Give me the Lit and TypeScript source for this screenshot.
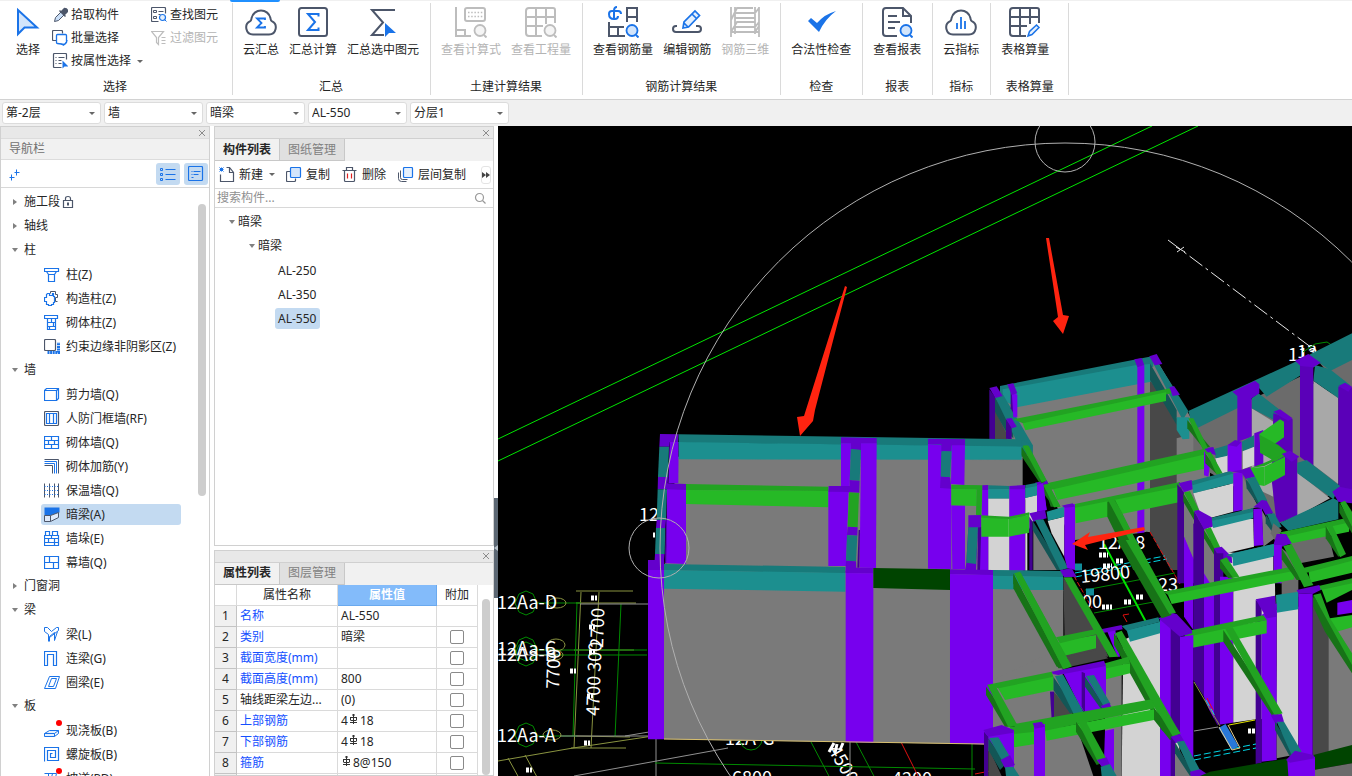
import { LitElement, html, css, svg, nothing } from "lit";
import { customElement, state } from "lit/decorators.js";

const blue = "#1a73e8";
const ink = "#4c566a";
const dim = "#bdbdbd";

const magnifier = (c: string, fill: string) =>
  svg`<circle cx="25" cy="24.5" r="5.5" fill=${fill} stroke=${c} stroke-width="1.8"/><path d="M29 29l2.5 2.5" stroke=${c} stroke-width="2"/>`;

const sigma = (c: string, w: number) =>
  svg`<path d="M20 10.5V8H9.500l7 8-7 8H20v-2.500" transform="translate(1.500 0)" fill="none" stroke=${c} stroke-width=${w}/>`;

const large: Record<string, unknown> = {
  pointer: svg`<path d="M6 4v24l6.500-6.500H25z" fill="#d3e5fb" stroke=${blue} stroke-width="2"/>`,
  cloudSum: svg`<path d="M8 28.500h16a7 7 0 0 0 2.800-13.300c-1.300-.7-.9-1.600-1.300-3a9.700 9.700 0 0 0-19 0c-.4 1.400 0 2.300-1.300 3A7 7 0 0 0 8 28.500z" fill="none" stroke=${ink} stroke-width="2"/><path d="M20 14v-1.500h-8l4.500 4.500-4.500 4.500h8V20" fill="none" stroke=${blue} stroke-width="1.800"/>`,
  frameSum: svg`<rect x="2" y="2" width="28" height="28" rx="2.500" fill="none" stroke=${ink} stroke-width="2"/>${sigma(blue, 2)}`,
  sumPick: svg`<path d="M28 4H5l11 12.500L5 29h12" fill="none" stroke=${ink} stroke-width="2"/><path d="M18 17v14l4-4h7z" fill=${blue}/>`,
  formula: svg`<g fill="none" stroke=${dim} stroke-width="2"><path d="M1 1v29h15M1 24h9v6"/><rect x="10" y="2" width="20" height="13" rx="2"/></g><path d="M13 6.500h15M13 10.500h15" stroke=${dim} stroke-width="1.500" stroke-dasharray="1.500 1.700"/>${magnifier(dim, "#f5f5f5")}`,
  grid: svg`<g fill="none" stroke=${dim} stroke-width="2"><path d="M30 17V4q0-2-2-2H4Q1 2 1 5v22q0 3 3 3h13M1 11h29M1 20h17M11 2v28M21 2v16"/></g>${magnifier(dim, "#f5f5f5")}`,
  rebarQty: svg`<g fill="none" stroke=${ink} stroke-width="2"><path d="M20 16V2h10v14M20 11h10M2 16v14h16M2 21h15M11 21v9"/></g><g fill="none" stroke=${blue} stroke-width="2"><path d="M7 14V5q0-4 3-4M2 8q0 5 5 5h1q3 0 3-3M5 5h6q3 0 3 3M2 8q0-3 3-3"/></g>${magnifier(blue, "#d3e5fb")}`,
  rebarEdit: svg`<path d="M6 20H5a3 3 0 0 0 0 6h22a3 3 0 0 0 0-6h-2" fill="none" stroke=${ink} stroke-width="2"/><path d="M12 22l1-6L24 5l4.500 4.500L17.500 21zM21 8l4.500 4.500M13 17l4 4" fill="#e5f0fd" stroke=${blue} stroke-width="1.700"/>`,
  rebar3d: svg`<g fill="none" stroke=${dim} stroke-width="1.800"><path d="M2 1v30M6 1v27M26 1v27M30 1v30M2 14L8 2h16M6 7h20l4-5M2 26l6-10h18M6 12h20M6 21h20l4-5M2 26h28M26 26l4-6"/></g>`,
  check: svg`<path d="M3 15l3-3 6 5Q20 8 31 5 20 13 14 26z" fill=${blue}/>`,
  report: svg`<path d="M16 30H5q-3 0-3-3V5q0-3 3-3h17l8 8v7M22 2v8h8" fill="none" stroke=${ink} stroke-width="2"/><path d="M7 10h9M7 16h12M7 22h7" stroke=${ink} stroke-width="2"/>${magnifier(blue, "#d3e5fb")}`,
  cloudBars: svg`<path d="M8 28.500h16a7 7 0 0 0 2.800-13.300c-1.300-.7-.9-1.600-1.300-3a9.700 9.700 0 0 0-19 0c-.4 1.400 0 2.300-1.300 3A7 7 0 0 0 8 28.500z" fill="none" stroke=${ink} stroke-width="2"/><path d="M12 17v6M16 11v12M20 15v8" stroke=${blue} stroke-width="1.800"/>`,
  sheet: svg`<g fill="none" stroke=${ink} stroke-width="2"><path d="M30 17V4q0-2-2-2H4Q1 2 1 5v22q0 3 3 3h13M1 11h29M1 20h17M11 2v28M21 2v16"/></g><path d="M19 30l1.500-4.500 7-6.500 2.500 2.500-7 7z" fill="#e5f0fd" stroke=${blue} stroke-width="1.500"/>`,
};

const small: Record<string, unknown> = {
  dropper: svg`<path d="M2 14l1-4 6-6 3 3-6 6z" fill="#c9def7" stroke=${ink}/><path d="M7 3l6 6M9 4l3-3q3 0 3 3l-3 3z" fill=${ink} stroke=${ink} stroke-width="1.500"/>`,
  batch: svg`<path d="M4 10H1q-1 0-1-1V1q0-1 1-1h8q1 0 1 1v2" fill="none" stroke=${ink} stroke-width="1.200"/><path d="M14 12l-2 2-7-1q-1 0-1-1V5q0-1 1-1h8q1 0 1 1v7z" fill="#fff" stroke=${blue} stroke-width="1.300"/><path d="M8 13l3 2 4-5" fill="none" stroke=${blue}/>`,
  byProp: svg`<path d="M9 14H2q-1 0-1-1V1q0-1 1-1h11q1 0 1 1v5M3 4h1M6 4h6M3 7h1M6 7h3M3 10h1M6 10h3" fill="none" stroke=${ink} stroke-width="1.200"/><path d="M10 7v8l2-2h4z" fill=${blue}/>`,
  find: svg`<path d="M7 14H1q-1 0-1-1V1q0-1 1-1h12q1 0 1 1v5M7 4h5M7 7h2" fill="none" stroke=${ink} stroke-width="1.200"/><path d="M2 3h3v2H2zM2 9h3v2H2z" fill="none" stroke=${ink}/><circle cx="11" cy="10" r="3" fill="#e5f0fd" stroke=${blue} stroke-width="1.200"/><path d="M13 12l2 2" stroke=${blue}/>`,
  filter: svg`<path d="M0 1h12L7 7v7l-2-2V7zM10 7h4M10 10h4M10 13h4" fill="none" stroke=${dim} stroke-width="1.200"/>`,
  list: svg`<path d="M5 3h10M5 8h10M5 13h10" stroke=${blue} stroke-width="1.200"/><path d="M0 2h2v2H0zM0 7h2v2H0zM0 12h2v2H0z" fill="none" stroke=${blue}/>`,
  card: svg`<rect x="0" y="0" width="14" height="14" rx="1" fill="none" stroke=${blue} stroke-width="1.200"/><path d="M3 5h1M5 5h7M3 8h1M5 8h5M3 11h2" stroke=${blue}/>`,
  plus: svg`<path d="M2 8v6M0 11h5M7 3v6M5 6h5" stroke=${blue}/>`,
  lock: svg`<path d="M3 6h9v7H3zM5 6V4q0-2 2.500-2t2.500 2v2" fill="none" stroke=${ink} stroke-width="1.200"/><path d="M7.500 8v3" stroke=${ink} stroke-width="2"/>`,
  column: svg`<path d="M0 1h14v3H0zM2 4l2 3h6l2-3M4 7v7h6V7" fill="none" stroke=${blue} stroke-width="1.200"/>`,
  ctorCol: svg`<path d="M6 2V0h5v3h2v3h-2v4h2" fill="none" stroke=${ink}/><path d="M3 2h2v2h3V2h1v3h1v6H9v2H7v1H4v-1H2v-3H0V6h2V3z" fill="#fff" stroke=${blue} stroke-width="1.200"/>`,
  brickCol: svg`<path d="M0 0h13v3H0zM3 3v11h8V3M3 7h8M3 11h8M7 3v4M9 7v4M5 11v3" fill="none" stroke=${blue} stroke-width="1.200"/>`,
  shadowZone: svg`<path d="M3 13h11V3" fill="none" stroke=${blue} stroke-width="3" stroke-dasharray="2 .6"/><rect x="0" y="0" width="11" height="11" rx="1" fill="#fff" stroke=${ink} stroke-width="1.200"/>`,
  shear: svg`<path d="M0 3h12v10H0zM0 3l2-2h12v10l-2 2M12 3l2-2" fill="none" stroke=${blue} stroke-width="1.200"/>`,
  airDef: svg`<rect x="0" y="0" width="14" height="14" rx="1" fill="none" stroke=${ink} stroke-width="1.200"/><path d="M2 2h10v10H2zM5 2v10M9 2v10" fill="none" stroke=${blue} stroke-width="1.200"/>`,
  brick: svg`<path d="M0 1h14v12H0zM0 5h14M0 9h14M7 1v4M4 5v4M10 5v4M7 9v4" fill="none" stroke=${blue} stroke-width="1.200"/>`,
  tie: svg`<path d="M0 0h14v14M8 14V6H0" fill="none" stroke=${ink}/><path d="M0 2h12v12M0 4h10v10" fill="none" stroke=${blue}/>`,
  insul: svg`<path d="M0 0v14M5 0v14M10 0v14M14 0v14" stroke=${ink}/><path d="M0 3h14M0 7h14M0 11h14" stroke=${blue} stroke-dasharray="1 1.500"/>`,
  hidden: svg`<path d="M0 0h15v5L6 8H0z" fill=${blue}/><path d="M0 8v6h6l8-4V5L6 8H0M6 8v6" fill="#dfeafa" stroke=${ink}/>`,
  pier: svg`<path d="M0 4h14v10H0zM1 0h4v4H1zM8 0h5v4H8zM0 7h14M0 11h14M7 4v3M4 7v4M10 7v7" fill="none" stroke=${blue} stroke-width="1.200"/>`,
  curtain: svg`<path d="M0 1h14v12H0zM0 7h14M5 1v6M9 7v6" fill="none" stroke=${blue} stroke-width="1.200"/>`,
  beam: svg`<path d="M0 0h3l4 4 5-4h2v3L5 10M0 0v4l4 3v7M5 14V9l5-4v8l3-9" fill="none" stroke=${blue}/>`,
  linkBeam: svg`<path d="M0 14V0h12v14h-3V3H3v11z" fill="none" stroke=${blue} stroke-width="1.200"/>`,
  ring: svg`<path d="M5 1h10l-4 12H0zM7 3h5l-3 8H4z" fill="none" stroke=${blue}/>`,
  slab: svg`<path d="M0 10l5-3h9l-4 3zM0 10v3h10v-3M10 13l4-3V7" fill="#e5f0fd" stroke=${blue}/>`,
  spiral: svg`<path d="M0 14V0h14v13H3V3h8v7H6V6h2" fill="none" stroke=${blue} stroke-width="1.200"/>`,
  ramp: svg`<path d="M0 2h12l-3 12H0M4 2v12M8 2L5 14" fill="none" stroke=${blue}/>`,
  create: svg`<path d="M1 7v7h13V5l-4-5H7M10 0v5h4" fill="none" stroke=${ink} stroke-width="1.200"/><path d="M0 0l4 4M4 0L0 4M2 0v4M0 2h4" stroke=${blue}/>`,
  copy: svg`<path d="M4 4H1q-1 0-1 1v8q0 1 1 1h7q1 0 1-1v-2" fill="none" stroke=${ink} stroke-width="1.200"/><rect x="4" y="0" width="10" height="10" rx="1" fill="#d3e5fb" stroke=${blue} stroke-width="1.200"/>`,
  trash: svg`<path d="M0 3h14M4 3V0h6v3M2 3v10q0 1 1 1h8q1 0 1-1V3" fill="none" stroke=${ink} stroke-width="1.200"/><path d="M5 6v5M9 6v5" stroke="#e02020" stroke-width="1.200"/>`,
  layerCopy: svg`<path d="M0 5v6q0 3 3 3h5M2 3v7q0 2 2 2h5" fill="none" stroke=${ink}/><rect x="5" y="0" width="9" height="10" rx="1" fill="#e5f0fd" stroke=${blue} stroke-width="1.200"/>`,
  search: svg`<circle cx="7" cy="7" r="4" fill="none" stroke="#999" stroke-width="1.200"/><path d="M10 10l3 3" stroke="#999" stroke-width="1.200"/>`,
};

const icon = (name: string) => html`<svg class="i16" viewBox="-0.5 -0.5 16 16" aria-hidden="true">${small[name]}</svg>`;
const bigIcon = (name: string) => html`<svg class="i32" viewBox="0 0 32 32" aria-hidden="true">${large[name]}</svg>`;
const steel = html`<svg class="steel" viewBox="0 0 10 10" role="img" aria-label="HRB400"><path d="M4.500 0v10M1 3.500h7M1 8.500h7M1.500 3v3M7.500 3v3M3 1h3M1.500 6.500h6" fill="none" stroke="#333"/></svg>`;

/* Face colours of the model, by material and by how the face is lit. */
const tone: Record<string, string> = {
  g: "#7a7a7a", gd: "#484848", gm: "#6b6b6b", gl: "#a8a8a8", w: "#d3d3d3",
  p: "#7700ee", pd: "#6400cc", ps: "#430092", pm: "#5a00b8",
  t: "#1c8f8f", td: "#187a7a", ts: "#135656",
  n: "#26b926", nm: "#22a322", ns: "#177317", nd: "#004400", k: "#000000",
};

const faces = (list: string) =>
  list.trim().split("\n").map((row) => {
    const [kind, ...pts] = row.trim().split(" ");
    return svg`<polygon points=${pts.join(" ")} fill=${tone[kind]}/>`;
  });

const westBlock = `
g 504,450 1700,460 1700,1020 1467,973 504,958
g 545,110 1580,110 1580,460 504,450
pd 492,42 548,43 546,66 521,66 519,80 490,80
td 490,80 519,80 516,171 486,171
pd 486,171 516,171 515,190 570,192 570,210 513,210 513,208 485,208
td 485,208 513,208 510,300 482,300
pd 482,300 510,300 508,324 480,324
td 480,324 508,324 506,402 477,402
pd 477,402 506,402 504,420 504,450 456,450 456,420 476,420
p 521,66 548,66 547,190 517,190
ps 510,300 514,300 512,430 506,430
p 513,208 570,210 570,432 511,430
p 456,450 504,450 504,958 456,958
td 548,43 1577,58 1577,82 548,68
t 548,66 1577,80 1577,119 548,118
nm 570,192 997,200 997,213 570,211
n 570,210 997,213 997,262 570,252
td 504,432 1048,441 1048,460 504,451
t 504,450 1048,459 1048,515 504,506
`;

const midBlock = `
pd 183,52 290,54 290,71 243,71 243,90 213,88 213,71 183,70
p 183,70 213,70 209,198 183,198
td 213,88 243,90 239,182 209,180
p 243,70 290,70 288,444 239,443
pd 209,180 239,182 238,218 145,216 146,198 209,198
p 145,215 206,216 198,438 145,438
nm 207,217 237,219 233,322 203,320
pd 203,320 233,322 232,347 201,345
td 201,345 232,347 228,424 198,422
ps 236,330 240,330 238,443 232,443
pd 198,422 228,424 229,443 280,444 280,461 196,459 197,440
p 197,459 280,460 280,968 197,966
nd 280,444 510,448 510,510 280,504
p 444,72 484,74 514,200 514,447 444,446
g 555,120 725,122 725,450 555,450
p 515,75 555,75 553,195 513,192
pd 444,56 555,58 555,76 515,76 514,95 484,94 484,73 444,72
td 484,94 514,94 511,172 482,170
pd 482,170 511,172 513,206 480,204
p 514,256 555,256 555,447 517,447
nm 514,194 608,196 608,210 514,208
n 514,207 590,208 590,258 514,256
nm 590,208 607,209 604,290 588,284
pd 607,196 625,195 625,211 607,210
p 607,210 625,210 625,292 605,290
td 625,196 688,198 688,208 625,208
t 625,207 688,208 688,236 625,236
w 625,236 688,236 688,452 625,452
p 688,207 736,205 736,452 688,452
pd 688,198 736,195 736,208 688,208
w 736,234 771,226 771,275 742,340 742,452 736,452
td 736,195 771,188 771,200 736,207
t 736,205 771,198 771,226 736,234
p 771,195 790,190 800,270 771,275
pd 565,286 604,285 604,325 594,322 588,452 555,452 559,428 565,322
td 565,322 594,322 588,432 559,428
ps 594,322 604,322 604,450 592,450
p 604,325 625,345 625,452 600,452
n 604,292 686,295 686,350 604,350
n 686,296 748,284 748,338 686,350
nm 604,286 686,290 748,277 748,285 686,297 604,293
td 639,450 850,453 850,472 639,468
t 639,467 850,471 850,512 639,507
pd 510,448 639,450 639,466 510,463
p 510,462 639,465 639,974 510,970
`;

const rearBlock = `
g 45,200 530,90 625,250 690,360 690,640 612,620 500,605 285,660 210,480 125,370 40,330
gd 510,150 590,265 608,330 600,720 572,720 510,605
g 590,325 690,300 690,480 590,470
ps 28,178 45,200 45,330 28,328
td 60,168 520,78 520,110 60,200
t 68,178 470,105 512,102 512,155 110,232 68,210
gd 45,240 80,310 80,330 45,328
ts 45,200 100,290 100,325 78,305 45,245
td 45,200 66,188 158,345 158,372 128,372
pd 28,174 50,169 68,198 46,204
ps 92,175 100,190 100,250 92,235
p 95,180 112,195 112,262 100,262
pd 82,163 100,160 112,190 95,195
ps 78,268 95,290 95,328 78,326
pd 78,266 95,264 110,290 95,295
ts 510,100 590,240 590,285 510,150
td 510,82 535,100 625,243 608,270
t 590,262 628,262 628,326 608,328 590,300
p 472,110 493,105 493,615 472,615
pd 463,88 485,84 493,105 472,112
pd 508,79 530,72 547,102 524,106
nm 100,268 575,174 575,190 135,282
n 128,280 558,187 558,213 136,301
pd 568,172 582,168 600,194 578,198
td 0,328 128,330 158,345 158,372 125,372 125,350 0,346
t 0,346 125,348 125,388 0,387
gm 640,290 960,140 1075,200 1075,480 900,580 850,520 640,400
gm 1020,100 1116,60 1116,200 1060,150
td 625,243 940,98 1116,10 1116,90 1052,122 1020,100 860,200 838,175 772,235 640,300
gl 815,235 880,275 880,500 815,470
gl 1000,152 1075,205 1075,462 1000,405
gl 950,425 1050,505 950,560
td 1005,105 1050,118 1110,165 1080,208 1000,152
pm 960,100 1000,105 1000,412 960,380
pd 945,92 985,72 1022,98 1000,112 962,108
pm 1075,170 1116,172 1116,490 1075,475
pd 1075,168 1095,158 1116,170 1105,185
td 815,205 835,190 900,240 885,272 815,235
pd 757,185 825,152 838,163 838,190 815,205 815,320 772,335 772,198
pm 880,250 938,268 938,370 952,380 952,560 890,580 875,450
pd 880,245 900,238 938,265 925,272 905,262
td 952,398 980,390 1080,468 1060,508 952,430
td 785,335 823,315 823,352 788,364
w 788,364 823,350 823,405 788,418
pd 823,310 850,300 850,405 823,410
n 838,312 900,268 912,275 912,322 880,345 840,340
nm 840,315 895,345 925,370 885,395 840,368
nm 810,415 853,408 915,378 905,375 850,400
n 810,415 853,410 853,468 820,462
n 853,410 915,380 915,435 853,468
pd 905,372 930,362 958,380 935,395
w 706,385 743,375 743,425 720,432
td 700,358 743,345 743,377 708,385
p 743,345 785,335 785,425 743,425
pd 743,345 765,330 785,335 770,350
td 900,578 1060,505 1075,512 1075,568 925,602
pd 1057,485 1078,470 1116,478 1116,520 1075,515
n 215,465 675,370 672,416 232,510
nm 190,462 672,357 690,370 210,480
p 672,362 690,400 685,440 672,436
pd 672,355 700,351 708,375 685,370
ns 622,270 622,295 670,355 690,350
nm 625,265 640,265 684,355 668,358
ns 122,350 122,375 200,490 212,530 238,530
nm 128,347 146,347 240,528 222,530
ns 676,370 676,400 712,434 700,405
nm 680,368 692,366 728,430 710,434
n 285,530 598,467 597,517 287,580
nm 285,522 600,456 600,470 285,533
w 0,505 24,505 24,556 0,556
w 136,504 171,496 171,545 148,550
td 24,466 87,466 87,478 24,478
t 136,473 171,468 171,496 136,504
p 172,466 188,460 200,540 172,545
pd 165,458 200,450 205,462 175,468
ns 190,460 190,490 222,532 238,530
nm 190,465 205,462 242,530 222,532
`;

const stair = `
ns 382,515 382,560 460,720 512,720 405,510
nm 385,512 402,507 425,545 512,720 495,720
`;

const eastTop = `
w 203,572 253,560 253,680 215,610
t 200,545 253,530 253,560 204,572
g 160,580 240,720 160,720
ps 148,560 158,575 158,720 148,720
pd 148,550 195,540 200,565 160,575
ts 158,572 158,600 230,720 250,720
td 165,570 190,568 265,715 240,720
p 253,525 285,522 285,720 262,715 253,680
pd 245,527 278,520 285,530 255,533
w 640,490 760,460 760,545 668,570
w 668,565 820,567 822,650 715,675
w 730,665 880,680 880,760 760,760
t 635,460 760,430 760,460 640,490
td 635,453 750,424 762,430 637,466
g 785,435 835,530 785,545
g 845,540 890,620 850,650
p 760,428 788,425 788,540 760,545
pd 755,424 783,420 810,412 825,440 797,447 786,430
ts 797,447 800,475 845,540 860,520
td 800,445 826,441 862,512 838,522
t 690,572 820,543 820,565 700,594
td 688,565 820,534 820,546 690,574
p 820,537 846,535 850,645 822,648
pd 820,532 845,510 860,512 880,550 857,555 846,535
ts 857,552 857,580 880,610 890,605
td 860,552 883,550 905,590 882,600
gm 880,580 905,600 890,640 872,610
gm 930,640 1040,595 1062,680 960,700
gm 900,650 960,700 940,760 900,760
n 920,610 1110,572 1107,605 925,642
nm 895,608 1110,562 1116,575 925,618
ns 1078,518 1078,548 1116,610 1116,580
nm 1080,518 1095,512 1116,545 1116,590
ns 1037,588 1037,625 1075,680 1085,672
nm 1040,585 1055,582 1098,672 1080,682
ps 592,462 612,487 612,760 592,760
g 612,487 642,545 642,700 612,625
p 612,620 642,690 642,760 612,760
pd 595,460 635,450 638,478 612,487
ns 610,490 610,515 645,575 655,565
nm 612,487 630,484 657,540 642,548
ps 642,545 674,598 674,800 642,800
g 672,595 705,655 705,800 672,800
pd 642,543 655,540 695,562 698,590 672,598
ns 672,600 672,625 706,680 712,665
nm 675,598 692,592 722,655 705,660
ps 702,655 722,690 722,800 702,800
pd 702,655 725,650 755,680 757,700 722,690
t 758,680 880,650 880,680 760,708
td 738,675 880,642 880,653 758,682
p 880,650 905,645 905,760 882,760
pd 880,645 890,612 918,612 935,640 905,650
`;

const eastLow = `
gd 250,112 355,275 385,350 255,355
g 40,150 250,150 250,300 230,330 40,420
w 430,300 540,250 590,300 600,708 425,708
g 375,400 425,380 425,708 375,708
p 612,-10 640,60 640,270 612,230
ps 640,-50 672,-20 672,470 640,420
p 672,100 702,150 702,560 672,470
ps 702,40 730,40 730,570 702,560
p 720,110 760,110 760,560 720,560
w 760,100 885,130 890,530 760,550
k 640,420 712,555 828,538 828,672 668,708 640,650
gm 905,115 955,100 955,170 905,175
gd 998,170 1045,230 1045,640 998,650
g 1045,235 1116,250 1116,640 1045,640
w 890,210 955,200 955,640 890,520
t 757,40 882,12 882,47 760,75
p 882,15 905,15 905,90 882,95
n 985,88 1116,58 1116,98 990,128
nm 945,90 1116,48 1116,62 980,98
n 560,155 942,92 942,118 575,192
nm 550,155 935,80 945,92 565,165
n 1022,140 1116,125 1116,150 1040,188
nm 1000,142 1116,115 1116,130 1022,150
n 1050,235 1116,225 1116,262 1060,278
p 1072,188 1116,180 1116,218 1072,225
nm 720,60 740,52 778,110 755,115
ns 720,60 720,85 745,115 758,112
ns 905,25 905,58 950,120 965,120
nm 910,18 935,12 1000,135 972,142
t 888,165 955,155 955,208 890,218
pd 950,150 1018,135 1022,150 998,162 955,160
p 955,160 998,162 998,650 955,650
ps 827,180 845,190 845,668 827,672
p 845,225 890,190 890,660 845,665
pd 827,178 885,167 890,230 860,235
ns 1000,165 1000,200 1035,275 1116,400 1116,360
nm 1000,165 1022,160 1050,235 1116,340 1116,375
n 615,285 860,240 860,280 615,328
nm 612,275 850,226 860,240 615,292
ns 730,270 730,305 875,525 895,520
nm 735,265 758,262 908,520 885,528
g 890,565 940,645 890,655
pd 872,525 905,522 912,545 885,550
ts 885,545 885,570 930,650 945,640
td 890,545 912,545 965,635 935,645
p 540,238 575,235 575,708 540,708
ps 572,240 602,290 602,600 572,600
p 600,290 640,285 640,708 600,600
pd 535,235 575,218 590,222 635,270 637,280 600,290
ns 410,0 545,235 575,225 445,0
nm 437,0 468,0 588,218 568,222
t 440,270 540,245 540,280 450,305
td 425,258 535,232 540,245 440,272
p 380,270 405,265 420,350 412,350
pd 352,270 425,255 428,268 365,280
nm 250,112 275,112 415,350 388,352
n 235,305 348,285 348,325 250,348
nm 228,292 345,268 352,282 240,310
gd 260,350 348,330 385,355 270,380
ns 402,280 402,315 500,480 525,480
nm 405,280 425,272 600,580 570,590
ns 402,282 402,310 450,400 545,570 572,590 450,375
ns 100,105 100,145 230,380 250,380
nm 103,100 122,98 275,378 245,385
p 250,400 378,372 378,510 315,520 300,500
gd 222,455 285,530 222,540
ps 210,455 222,455 222,540 210,540
n 378,380 450,370 450,400 378,418
nm 375,370 445,350 450,370 378,385
pd 215,395 372,362 378,378 235,405 218,402
ps 305,395 315,400 315,520 305,500
ts 220,410 220,450 270,520 295,520
td 225,408 250,405 312,518 285,530
ts 315,410 315,440 365,510 375,500
td 318,408 342,405 392,492 372,500
pd 362,498 388,488 398,510 375,514
g 50,480 210,455 215,540 105,550
n 52,440 220,408 220,450 75,480
nm 20,435 215,395 220,410 55,445
g 100,600 290,560 340,708 100,708
n 195,570 522,508 522,540 200,602
n 102,580 165,570 165,612 102,622
nm 85,555 515,478 525,505 195,572 100,582
ns 18,440 18,465 75,560 105,560
nm 22,435 45,435 112,555 85,562
p 162,555 195,552 195,708 162,708
pd 158,550 185,545 195,560 165,566
p 375,572 402,567 402,708 372,660
ns 288,545 288,575 350,675 375,665
nm 292,542 315,540 378,655 355,668
pd 350,660 380,652 390,675 365,680
td 362,680 390,672 410,708 365,708
ns 522,505 522,540 570,600 595,590
nm 525,500 545,500 602,580 580,592
g 582,600 640,708 582,708
pd 572,590 600,582 612,602 585,610
ps 572,590 585,605 585,708 572,708
ts 585,608 585,640 630,708 640,700
td 590,605 612,602 660,690 635,700
pd 630,695 660,688 690,708 632,708
p 12,572 102,572 102,708 85,690 12,620
ps 12,575 25,590 25,708 12,708
gd 25,620 65,708 25,708
pd 10,570 65,555 102,570 100,578 25,590
ts 25,595 25,630 60,690 80,670
td 28,594 55,592 90,650 65,660
pd 62,660 90,645 105,675 75,685
td 75,682 100,680 118,708 78,708
nd 690,695 925,655 925,708 660,708
nd 1000,645 1116,615 1116,670 1000,690
gm 1000,690 1116,670 1116,708 1000,708
p 922,662 1005,650 1005,708 925,708
pd 918,660 945,632 1000,645 1005,655 930,668
`;

const frontBeams = `
ns 700,460 700,490 835,745 850,745
nm 703,460 720,455 875,740 850,748
pd 840,450 875,445 890,470 852,472
ns 725,80 725,105 785,190 795,185
nm 728,78 742,76 800,182 785,187
`;

@customElement("cad-view")
export class CadView extends LitElement {
  static styles = css`
    :host { display: block; min-width: 0; overflow: hidden; background: #000; }
    svg { display: block; width: 100%; height: 100%; }
    text { font: 18px "Noto Sans CJK SC", "Noto Sans", sans-serif; fill: #fff; }
    .thin { fill: none; stroke-width: 1; }
    .lime { stroke: #00e600; }
    .pine { stroke: #008a00; }
    .olive { stroke: #8a9440; }
    .ash { stroke: #909090; }
    .orbit { stroke: #b0b0b0; }
    .cyan { stroke: #00d8e8; stroke-dasharray: 7 3; }
    .red { stroke: #e01010; }
    .chalk { stroke: #e8e8e8; }
    .mark { fill: #ff2410; }
    .blot { stroke: #fff; stroke-width: 5; stroke-dasharray: 3 1; }
  `;

  render() {
    const hex = (x: number, y: number) =>
      svg`<polygon class="thin pine" points="${x - 11},${y} ${x - 7},${y - 9} ${x},${y - 12} ${x + 7},${y - 9} ${x + 11},${y} ${x + 7},${y + 9} ${x},${y + 12} ${x - 7},${y + 9}"/>`;
    return html`<svg viewBox="498 126 854 650" preserveAspectRatio="xMinYMin slice" role="img" aria-label="三维模型">
      <path class="thin lime" d="M498 439L1152 126M498 461L1198 126"/>
      <path class="thin chalk" stroke-dasharray="16 4 3 4" d="M1168 240L1312 348"/>
      <path class="thin chalk" d="M1176 247l9 5M1177 252l7-5"/>
      <text x="1288" y="361">112</text><text x="1297" y="358">13</text>
      <path class="thin pine" d="M1303 352l12-8 12-2 6 4"/>

      ${[[526, 603], [526, 649], [526, 654], [526, 735]].map(([x, y]) => hex(x, y))}
      <path class="thin olive" d="M576 591h57M576 603h60M574 650h60M576 736l54 1M571 748h55M581 592l-7 156M599 592l-8 156M498 761l75-13 100-15"/>
      <path class="thin pine" d="M537 603h44M537 650h110M537 655h110M537 736h40M577 602l-4 134M621 604l-6 133"/>
      <path class="thin ash" d="M580 604h68M625 736l30-5M574 776l154-28M656 739v37M560 736h90M498 655h60"/>
      <path class="thin olive" d="M508 758l11 20M525 755l12 22"/>
      <g class="thin olive"><ellipse cx="557" cy="603" rx="9" ry="5"/><ellipse cx="556" cy="645" rx="9" ry="6"/><ellipse cx="555" cy="655" rx="8" ry="5"/><ellipse cx="552" cy="735" rx="9" ry="5"/></g>
      <text x="497" y="609">12Aa-D</text><text x="497" y="655">12Aa-C</text><text x="497" y="661">12Aa-B</text><text x="497" y="742">12Aa-A</text>
      <text transform="translate(559 689) rotate(-88)">7700</text>
      <text transform="translate(599 716) rotate(-88)">4700 300</text>
      <text transform="translate(603 648) rotate(-88)">2700</text>
      <path class="blot" d="M591 598h6M589 627h6M589 652h6M570 671h6M587 696h6M584 743h6M526 770h6"/>
      <text x="639" y="521">12</text><path class="blot" d="M653 535h2"/>
      <text x="725" y="745">12A-G</text><text x="732" y="784">6800</text>
      <text transform="translate(828 750) rotate(60)">4500</text><text x="892" y="785">4200</text>
      <circle class="thin pine" cx="751" cy="739" r="11"/>
      <path class="thin pine" d="M655 763l320 6M811 742l20 38M856 742l20 38M972 744v32"/>
      <path class="thin red" d="M901 742l18 36M975 774l20-4"/>
      <path class="thin ash" d="M850 742v34"/>
      <path d="M829 752l5-9M835 753l2-9M840 750l3-7" stroke="#fff" stroke-width="3"/>

      <g transform="translate(980 330) scale(.33333)">${faces(rearBlock)}</g>
      <g transform="translate(496 420) scale(.33333)">${faces(westBlock)}</g>
      <g transform="translate(780 420) scale(.33333)">${faces(midBlock)}</g>
      <path d="M664 739L984 744" stroke="#d8c070"/>

      <polygon points="1075,540 1150,532 1178,584 1178,618 1100,628 1063,577" fill="#000"/>
      <g>
        <path class="thin cyan" d="M1075 577l92-18M1075 573l90-17"/>
        <path class="thin pine" d="M1085 590l90-17M1094 613l65-12"/>
        <path d="M1104 544L1146 622" stroke="#00e000" stroke-width="2"/>
        <path class="thin red" stroke-dasharray="5 2" d="M1150 532l30 52M1074 576l18 32"/>
        <path class="blot" d="M1099 555h9M1103 566h9M1116 561h8M1124 602h8M1136 597h8M1102 607h10"/>
        <path d="M1075 567h7M1086 592h8" stroke="#118c9a" stroke-width="7"/>
        <path class="thin red" d="M1127 622l-4-7 6-1"/>
        <text x="1098" y="549">12A-8</text>
        <text transform="translate(1081 583) rotate(-6)">19800</text>
        <text x="1082" y="608">00</text><text x="1158" y="591">23</text>
      </g>
      <g transform="translate(980 330) scale(.33333)">${faces(stair)}</g>
      <g transform="translate(980 330) scale(.33333)">${faces(eastTop)}</g>
      <g transform="translate(980 540) scale(.33333)">${faces(eastLow)}</g>
      <g transform="translate(780 420) scale(.33333)">${faces(frontBeams)}</g>

      <path class="thin cyan" d="M1194 756l62-12M1194 760l62-12M1206 700l9 16"/>
      <path class="thin olive" d="M1194 682l26 44"/>
      <path class="thin red" d="M1207 698l6 12"/>
      <path d="M1222 726l13 22" stroke="#2878d8" stroke-width="8"/>
      <path class="thin" stroke="#e8d090" d="M1219 727l13 23 8-2-12-23"/>
      <path d="M1229 725l26-5" stroke="#e0e000"/>
      <path class="thin ash" d="M1194 731l24-4"/>
      <path class="blot" d="M1248 731h7"/>

      <clipPath id="west"><path d="M498 126H1352V330H1065V400H990V430H900V776H498z"/></clipPath>
      <circle class="thin orbit" cx="1065" cy="548" r="405" clip-path="url(#west)"/>
      <circle class="thin orbit" cx="1065" cy="142" r="30"/>
      <circle class="thin orbit" cx="659" cy="548" r="30"/>

      <polygon class="mark" points="845,286 847,287 815,410 813,421 800,436 797,417 804,416"/>
      <polygon class="mark" points="1046,238 1049,238 1063,315 1069,316 1063,334 1053,321 1058,317"/>
      <polygon class="mark" points="1144,527 1145,530 1085,545 1088,550 1072,544 1090,532 1088,537"/>
    </svg>`;
  }
}

interface Tool { icon: string; label: string; off?: boolean; }
const groups: { title: string; tools: Tool[]; wide?: boolean }[] = [
  { title: "汇总", tools: [{ icon: "cloudSum", label: "云汇总" }, { icon: "frameSum", label: "汇总计算" }, { icon: "sumPick", label: "汇总选中图元" }] },
  { title: "土建计算结果", tools: [{ icon: "formula", label: "查看计算式", off: true }, { icon: "grid", label: "查看工程量", off: true }] },
  { title: "钢筋计算结果", tools: [{ icon: "rebarQty", label: "查看钢筋量" }, { icon: "rebarEdit", label: "编辑钢筋" }, { icon: "rebar3d", label: "钢筋三维", off: true }] },
  { title: "检查", tools: [{ icon: "check", label: "合法性检查" }] },
  { title: "报表", tools: [{ icon: "report", label: "查看报表" }] },
  { title: "指标", tools: [{ icon: "cloudBars", label: "云指标" }] },
  { title: "表格算量", tools: [{ icon: "sheet", label: "表格算量" }], wide: true },
];

const navTree: { name: string; lock?: boolean; kids?: [string, string, boolean?][] }[] = [
  { name: "施工段", lock: true },
  { name: "轴线" },
  { name: "柱", kids: [["column", "柱(Z)"], ["ctorCol", "构造柱(Z)"], ["brickCol", "砌体柱(Z)"], ["shadowZone", "约束边缘非阴影区(Z)"]] },
  { name: "墙", kids: [["shear", "剪力墙(Q)"], ["airDef", "人防门框墙(RF)"], ["brick", "砌体墙(Q)"], ["tie", "砌体加筋(Y)"], ["insul", "保温墙(Q)"], ["hidden", "暗梁(A)"], ["pier", "墙垛(E)"], ["curtain", "幕墙(Q)"]] },
  { name: "门窗洞" },
  { name: "梁", kids: [["beam", "梁(L)"], ["linkBeam", "连梁(G)"], ["ring", "圈梁(E)"]] },
  { name: "板", kids: [["slab", "现浇板(B)", true], ["spiral", "螺旋板(B)"], ["ramp", "坡道(PD)", true]] },
];

const props: [string, unknown, boolean, boolean][] = [
  ["名称", "AL-550", true, false],
  ["类别", "暗梁", true, true],
  ["截面宽度(mm)", "", true, true],
  ["截面高度(mm)", "800", true, true],
  ["轴线距梁左边...", "(0)", false, true],
  ["上部钢筋", html`4${steel}18`, true, true],
  ["下部钢筋", html`4${steel}18`, true, true],
  ["箍筋", html`${steel}8@150`, true, true],
  ["肢数", "2", true, true],
];

@customElement("app-root")
export class AppRoot extends LitElement {
  @state() private picked = "暗梁(A)";
  @state() private part = "AL-550";

  static styles = css`
    :host {
      display: flex; flex-direction: column; height: 100vh; overflow: hidden;
      background: #fff; color: #262626;
      font: 12px/16px "Noto Sans", "Noto Sans CJK SC", sans-serif;
    }
    * { box-sizing: border-box; }
    button, select, input { font: inherit; color: inherit; margin: 0; }
    button { padding: 0; border: 0; background: none; white-space: nowrap; }
    button:disabled { color: #b4b4b4; }
    ul { list-style: none; margin: 0; padding: 0; }
    svg { display: block; flex: none; }
    .i16 { width: 16px; height: 16px; }
    .i32 { width: 32px; height: 32px; }

    .ribbon { display: flex; flex: none; height: 100px; border-top: 1px solid #f0f0f0; border-bottom: 1px solid #d2d2d2; padding: 2px 0 4px; position: relative; }
    .ribbon::before { content: ""; position: absolute; top: -1px; left: 230px; width: 50px; height: 2px; border-radius: 0 0 2px 2px; background: #2090ff; }
    .group { display: flex; flex-direction: column; justify-content: space-between; padding: 3px 11px 0 10px; border-right: 1px solid #dadada; }
    .group.wide { padding-right: 19px; }
    .group.first { padding: 3px 14px 0 12px; }
    .group.wide .title { margin-right: -9px; }
    .title { text-align: center; }
    .tools { display: flex; gap: 10px; }
    .tool { display: flex; flex-direction: column; align-items: center; gap: 4px; }
    .stack { display: flex; flex-direction: column; gap: 7px; padding-top: 1px; }
    .first .tools { gap: 8px; }
    .row { display: flex; align-items: center; gap: 3px; }
    .caret { width: 0; height: 0; border: 3px solid transparent; border-top-color: #666; border-bottom: 0; }
    .row .caret { margin-left: 3px; }

    .context { display: flex; flex: none; gap: 3px; padding: 2px; height: 26px; background: #f0f0f0; }
    .pick { display: flex; align-items: center; width: 99px; height: 22px; padding-right: 5px; background: #fff; border: 1px solid #dcdcdc; border-radius: 3px; }
    .pick select { flex: 1; min-width: 0; appearance: none; border: 0; background: none; padding: 0 0 0 3px; line-height: 20px; outline: 0; }

    .work { flex: 1; min-height: 0; display: grid; grid-template-columns: 210px 280px 1fr; column-gap: 4px; }
    .panel { display: flex; flex-direction: column; min-height: 0; overflow: hidden; border: 1px solid #d0d0d0; background: #fff; }
    .strip { display: flex; flex: none; align-items: center; justify-content: flex-end; height: 11px; padding-right: 3px; background: #e8e8e8; }
    .strip svg { width: 8px; height: 8px; }
    .nav { border-bottom: 0; }
    .head { flex: none; height: 22px; padding: 2px 8px; background: #f1f1f1; border-top: 1px solid #dcdcdc; border-bottom: 1px solid #dcdcdc; color: #707070; }
    .bar { display: flex; flex: none; align-items: center; height: 28px; border-bottom: 1px solid #d8d8d8; }
    .nav .bar { gap: 4px; padding: 0 1px 0 8px; }
    .nav .bar .plus { margin-right: auto; }
    .toggle { display: grid; place-items: center; width: 24px; height: 22px; border-radius: 3px; background: #c3daf1; }
    .scroll { display: flex; flex: 1; min-height: 0; overflow: hidden; }
    .tree { flex: 1; padding-top: 2px; min-width: 0; }
    .thumb { flex: none; width: 8px; border-radius: 4px; background: #cdcdcd; }
    .nav .thumb { height: 292px; margin: 16px 3px 0 0; }
    .node { display: flex; align-items: center; height: 24px; gap: 6px; padding-left: 10px; }
    .nav .node svg { margin-left: -6px; }
    .fold { width: 7px; height: 7px; display: grid; place-items: center; }
    .fold::before { content: ""; border: 3px solid transparent; border-top: 4px solid #808080; border-bottom: 0; }
    .fold.shut::before { border: 3px solid transparent; border-left: 4px solid #808080; border-right: 0; }
    .leaf { display: flex; align-items: center; gap: 6px; width: 140px; height: 21px; margin: 2px 0 1px 40px; padding: 0 3px; border-radius: 3px; white-space: nowrap; position: relative; }
    .kid { display: flex; height: 24px; }
    .on { background: #c3daf1; }
    .dot { position: absolute; left: 15px; top: 0; width: 6px; height: 6px; border-radius: 50%; background: #f00; }

    .side { display: grid; grid-template-rows: 65fr 35fr; row-gap: 4px; min-height: 0; }
    .tabs { display: flex; flex: none; height: 23px; background: #f1f1f1; border-top: 1px solid #d0d0d0; }
    .tabs button { width: 65px; border-right: 1px solid #c8c8c8; border-bottom: 1px solid #c8c8c8; background: #e0e0e0; color: #808080; }
    .tabs button:first-child { background: #f1f1f1; color: #262626; font-weight: 700; }
    .side .bar { padding: 0 2px 0 4px; }
    .act { display: flex; align-items: center; gap: 4px; margin-right: 12px; }
    .act.menu { margin-right: 11px; }
    .act .caret { margin-left: 2px; }
    .more { width: 10px; height: 18px; margin-left: auto; border: 1px solid #e4e4e4; border-radius: 3px; display: grid; place-items: center; }
    .more svg { width: 8px; height: 6px; }
    .find { display: flex; flex: none; align-items: center; height: 19px; padding: 0 5px 0 2px; border-bottom: 1px solid #d8d8d8; }
    .find input { flex: 1; min-width: 0; border: 0; padding: 0; outline: 0; height: 16px; }
    .find input::placeholder { color: #909090; opacity: 1; }
    .parts .node { gap: 3px; padding-left: 13px; }
    .parts .node.deep { padding-left: 33px; }
    .part { display: block; height: 21px; margin: 2px 0 1px 60px; padding: 0 4px 0 3px; border-radius: 3px; }
    table { border-collapse: separate; border-spacing: 0; table-layout: fixed; width: 263px; flex: none; align-self: flex-start; }
    .c1 { width: 22px; } .c2 { width: 101px; } .c3 { width: 99px; } .c4 { width: 41px; }
    th, td { height: 21px; padding: 0 3px; font-weight: 400; text-align: left; border-right: 1px solid #dadada; border-bottom: 1px solid #dadada; white-space: nowrap; overflow: hidden; }
    thead th { text-align: center; }
    thead .hot { background: #83bbfa; color: #fff; border-color: #6aa9ee; font-weight: 700; }
    tbody th { text-align: center; background: #f0f0f0; border-color: #c4c4c4; padding: 0; }
    .key { color: #1450ff; }
    .steel { display: inline-block; width: 10px; height: 10px; margin: 0 1px; vertical-align: 1px; }
    td label { display: grid; place-items: center; }
    td input { appearance: none; width: 14px; height: 14px; border: 1px solid #8a8a8a; border-radius: 2px; background: #fff; }
    .props .scroll { justify-content: space-between; }
    .props .thumb { margin: 14px 3px 0 0; }

    .stage { display: grid; grid-template-columns: minmax(0, 1fr); position: relative; min-height: 0; }
    .grip { position: absolute; left: -4px; top: 372px; width: 4px; height: 100px; background: #5c6773; display: grid; place-items: center; }
    .grip::before { content: ""; border: 3px solid transparent; border-right: 4px solid #b8c2cc; border-left: 0; }
  `;

  private strip() {
    return html`<div class="strip"><button aria-label="关闭"><svg viewBox="0 0 8 8"><path d="M1 1l6 6M7 1L1 7" stroke="#8c8c8c"/></svg></button></div>`;
  }

  private row(name: string, label: string, off = false, menu = false) {
    return html`<button class="row" ?disabled=${off}>${icon(name)}<span>${label}</span>${menu ? html`<i class="caret"></i>` : nothing}</button>`;
  }

  render() {
    return html`
      <header class="ribbon">
        <section class="group first">
          <div class="tools">
            <button class="tool">${bigIcon("pointer")}<span>选择</span></button>
            <div class="stack">
              ${this.row("dropper", "拾取构件")}${this.row("batch", "批量选择")}${this.row("byProp", "按属性选择", false, true)}
            </div>
            <div class="stack">${this.row("find", "查找图元")}${this.row("filter", "过滤图元", true)}</div>
          </div>
          <div class="title">选择</div>
        </section>
        ${groups.map((g) => html`
          <section class="group ${g.wide ? "wide" : ""}">
            <div class="tools">${g.tools.map((t) => html`<button class="tool" ?disabled=${t.off}>${bigIcon(t.icon)}<span>${t.label}</span></button>`)}</div>
            <div class="title">${g.title}</div>
          </section>`)}
      </header>
      <div class="context">
        ${[["楼层", "第-2层"], ["构件大类", "墙"], ["构件类型", "暗梁"], ["构件", "AL-550"], ["分层", "分层1"]].map(
          ([name, value]) => html`<label class="pick"><select aria-label=${name}><option>${value}</option></select><i class="caret"></i></label>`)}
      </div>
      <main class="work">
        <nav class="panel nav">
          ${this.strip()}
          <div class="head">导航栏</div>
          <div class="bar">
            <button class="plus" aria-label="添加">${icon("plus")}</button>
            <button class="toggle" aria-label="列表">${icon("list")}</button>
            <button class="toggle" aria-label="卡片">${icon("card")}</button>
          </div>
          <div class="scroll">
            <ul class="tree">
              ${navTree.map((n) => html`<li>
                <div class="node"><i class="fold ${n.kids ? "" : "shut"}"></i><span>${n.name}</span>${n.lock ? icon("lock") : nothing}</div>
                ${n.kids ? html`<ul>${n.kids.map(([ic, label, dot]) => html`<li class="kid">
                  <button class="leaf ${this.picked === label ? "on" : ""}" @click=${() => (this.picked = label)}>
                    ${icon(ic)}<span>${label}</span>${dot ? html`<i class="dot"></i>` : nothing}
                  </button></li>`)}</ul>` : nothing}
              </li>`)}
            </ul>
            <div class="thumb"></div>
          </div>
        </nav>
        <div class="side">
          <section class="panel parts">
            ${this.strip()}
            <div class="tabs"><button>构件列表</button><button>图纸管理</button></div>
            <div class="bar">
              <button class="act menu">${icon("create")}<span>新建</span><i class="caret"></i></button>
              <button class="act">${icon("copy")}<span>复制</span></button>
              <button class="act">${icon("trash")}<span>删除</span></button>
              <button class="act">${icon("layerCopy")}<span>层间复制</span></button>
              <button class="more" aria-label="更多"><svg viewBox="0 0 8 6"><path d="M0 0l4 3-4 3zM4 0l4 3-4 3z" fill="#444"/></svg></button>
            </div>
            <label class="find"><input placeholder="搜索构件..." aria-label="搜索构件">${icon("search")}</label>
            <ul class="tree">
              <li><div class="node"><i class="fold"></i><span>暗梁</span></div>
                <ul><li><div class="node deep"><i class="fold"></i><span>暗梁</span></div>
                  <ul>${["AL-250", "AL-350", "AL-550"].map((p) => html`<li class="kid"><button class="part ${this.part === p ? "on" : ""}" @click=${() => (this.part = p)}>${p}</button></li>`)}</ul>
                </li></ul>
              </li>
            </ul>
          </section>
          <section class="panel props">
            ${this.strip()}
            <div class="tabs"><button>属性列表</button><button>图层管理</button></div>
            <div class="scroll">
              <table>
                <colgroup><col class="c1"><col class="c2"><col class="c3"><col class="c4"></colgroup>
                <thead><tr><th></th><th>属性名称</th><th class="hot">属性值</th><th>附加</th></tr></thead>
                <tbody>
                  ${props.map(([name, value, key, box], i) => html`<tr>
                    <th>${i + 1}</th><td class=${key ? "key" : ""}>${name}</td><td>${value}</td>
                    <td>${box ? html`<label><input type="checkbox" aria-label="附加 ${name}"></label>` : nothing}</td>
                  </tr>`)}
                </tbody>
              </table>
              <div class="thumb"></div>
            </div>
          </section>
        </div>
        <div class="stage"><cad-view></cad-view><i class="grip"></i></div>
      </main>`;
  }
}
